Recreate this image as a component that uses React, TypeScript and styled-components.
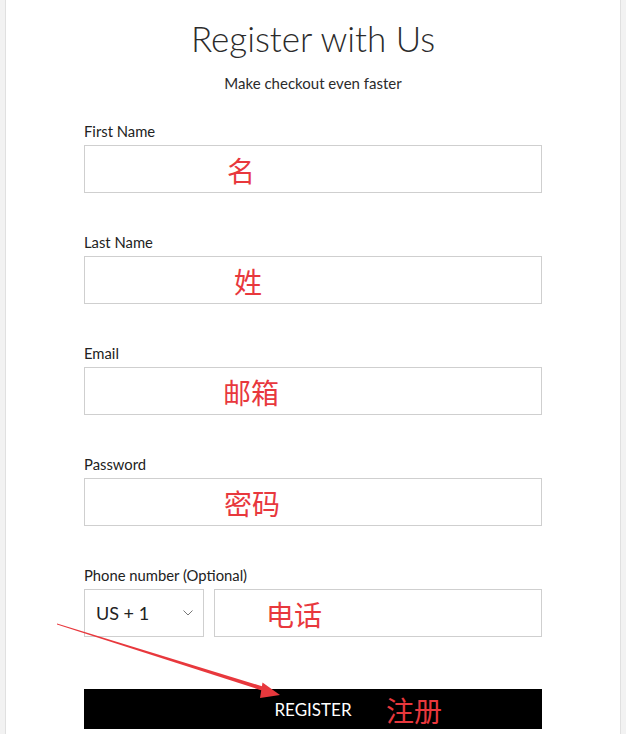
import React from "react";
import styled, { createGlobalStyle } from "styled-components";

const GlobalStyle = createGlobalStyle`
  html, body {
    margin: 0;
    padding: 0;
    background: #f2f2f2;
  }
  body {
    font-family: "Lato", "Liberation Sans", sans-serif;
    color: #222;
  }
`;

const Frame = styled.div`
  position: relative;
  width: 626px;
  height: 734px;
  overflow: hidden;
`;

const Panel = styled.main`
  box-sizing: border-box;
  width: 616px;
  height: 734px;
  margin: 0 5px;
  background: #fff;
  border-left: 1px solid #e0e0e0;
  border-right: 1px solid #e0e0e0;
  padding-top: 16px;
`;

const Title = styled.h1`
  margin: 0;
  text-align: center;
  font-size: 35px;
  line-height: 44px;
  font-weight: 300;
  color: #2b2b2b;
`;

const Subtitle = styled.p`
  margin: 13px 0 0;
  text-align: center;
  font-size: 15px;
  line-height: 20px;
  color: #2b2b2b;
`;

const Form = styled.form`
  width: 458px;
  margin: 29px auto 0;
`;

const Field = styled.div`
  margin-bottom: 40px;
`;

const Label = styled.label`
  display: block;
  font-size: 14.8px;
  line-height: 18px;
  margin-bottom: 5px;
  color: #222;
`;

const InputBox = styled.div<{ $width?: number }>`
  position: relative;
  box-sizing: border-box;
  height: 48px;
  flex: ${(p) => (p.$width ? `0 0 ${p.$width}px` : "1")};
  border: 1px solid #cfcfcf;
  background: #fff;
`;

const Note = styled.span<{ $left: number }>`
  position: absolute;
  left: ${(p) => p.$left}px;
  top: 50%;
  transform: translateY(-46%);
  font-family: "Noto Sans CJK SC", sans-serif;
  font-size: 28px;
  line-height: 1;
  color: #e8383d;
  white-space: nowrap;
`;

const PhoneRow = styled.div`
  display: flex;
  gap: 10px;
`;

const Select = styled(InputBox)`
  display: flex;
  align-items: center;
  justify-content: space-between;
  padding: 0 10px 0 11px;
  font-size: 18px;
  color: #222;
`;

const Button = styled.button`
  position: relative;
  display: block;
  width: 100%;
  height: 40px;
  margin-top: 52px;
  border: none;
  background: #000;
  color: #fff;
  font-family: "Lato", "Liberation Sans", sans-serif;
  font-size: 17px;
  letter-spacing: 0;
`;

const Arrow = styled.svg`
  position: absolute;
  left: 0;
  top: 0;
  pointer-events: none;
`;

const fields = [
  { label: "First Name", note: "名", left: 142 },
  { label: "Last Name", note: "姓", left: 149 },
  { label: "Email", note: "邮箱", left: 138 },
  { label: "Password", note: "密码", left: 139 },
];

const App: React.FC = () => {
  return (
    <Frame>
      <GlobalStyle />
      <Panel>
        <Title>Register with Us</Title>
        <Subtitle>Make checkout even faster</Subtitle>
        <Form onSubmit={(e) => e.preventDefault()}>
          {fields.map((f) => (
            <Field key={f.label}>
              <Label>{f.label}</Label>
              <InputBox>
                <Note $left={f.left}>{f.note}</Note>
              </InputBox>
            </Field>
          ))}
          <Field style={{ marginBottom: 0 }}>
            <Label>Phone number (Optional)</Label>
            <PhoneRow>
              <Select $width={120}>
                <span>US + 1</span>
                <svg width="10" height="6" viewBox="0 0 10 6">
                  <path d="M0.5 0.5 L5 5 L9.5 0.5" fill="none" stroke="#777" strokeWidth="1" />
                </svg>
              </Select>
              <InputBox>
                <Note $left={51}>电话</Note>
              </InputBox>
            </PhoneRow>
          </Field>
          <Button type="submit">
            REGISTER
            <Note $left={302}>注册</Note>
          </Button>
        </Form>
      </Panel>
      <Arrow width="626" height="734" viewBox="0 0 626 734">
        <polygon points="57,623.5 57,624.5 265,691.5 266,687.5" fill="#e8383d" />
        <polygon points="280,695 262.5,682.5 260,698" fill="#e8383d" />
      </Arrow>
    </Frame>
  );
};

export default App;
